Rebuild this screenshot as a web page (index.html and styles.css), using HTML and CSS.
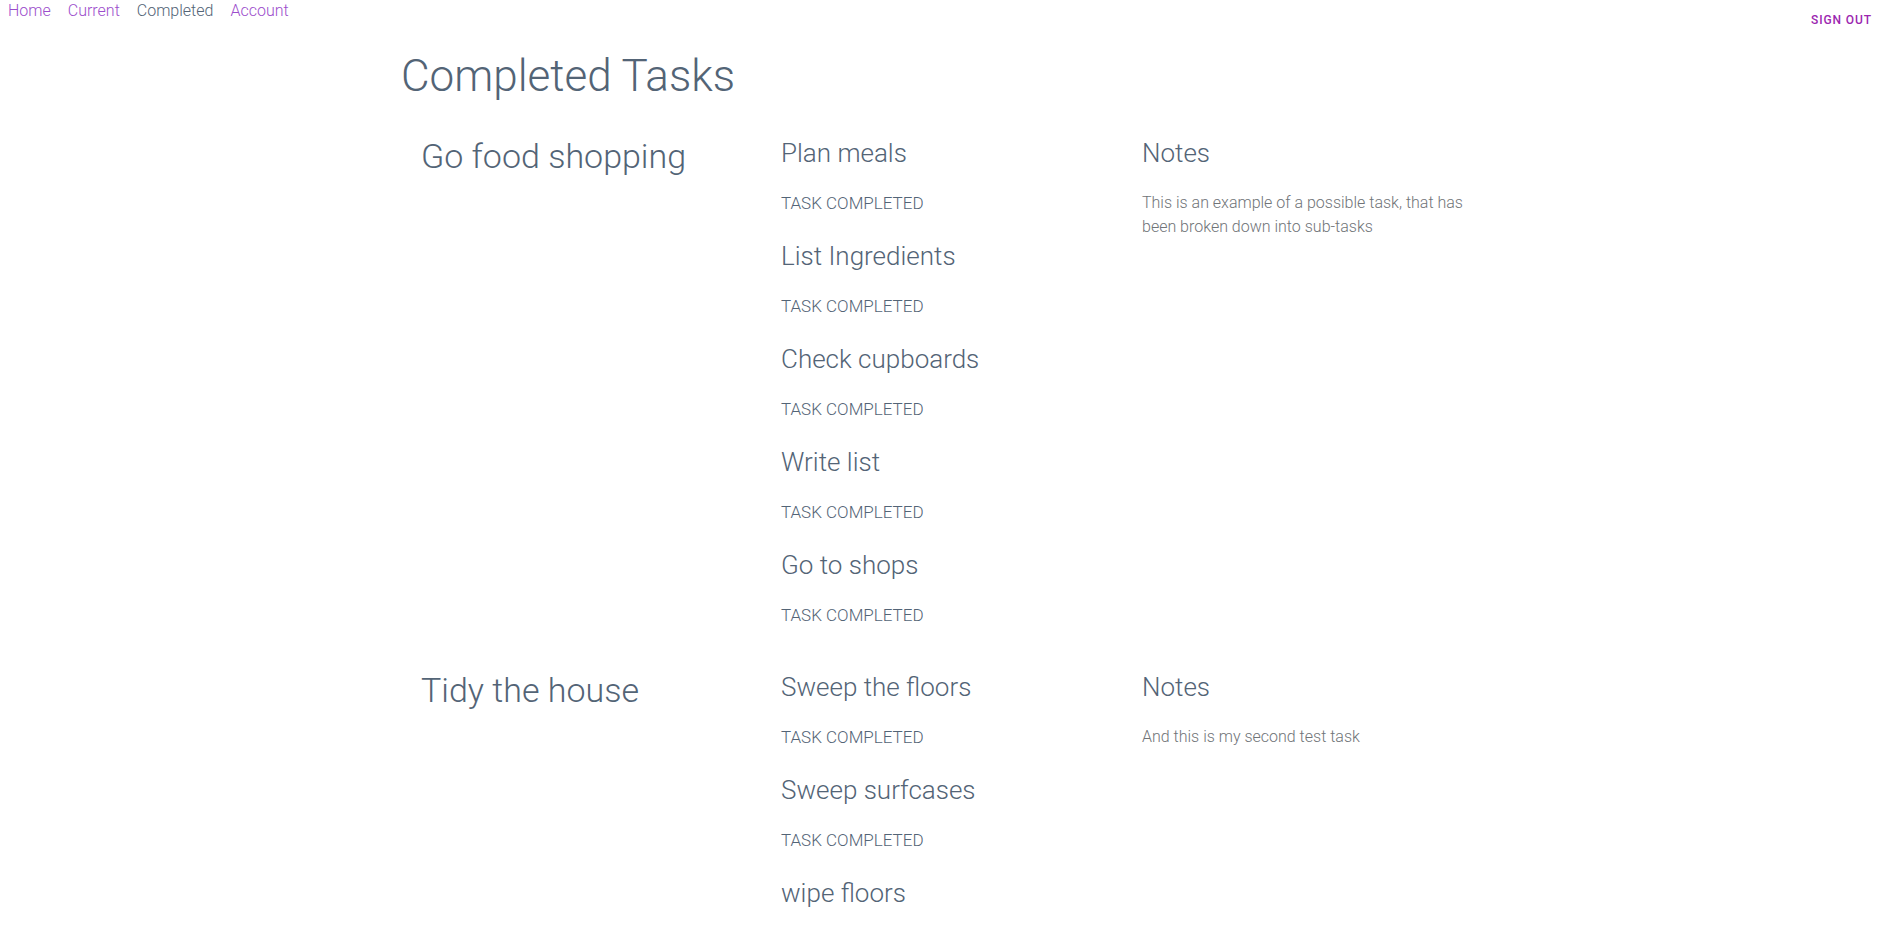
FILE: index.html
```html
<!DOCTYPE html>
<html lang="en">
<head>
<meta charset="utf-8">
<title>Completed Tasks</title>
<link rel="stylesheet" href="styles.css">
</head>
<body>
<header class="topbar">
  <nav class="nav">
    <a class="nav-link" href="#">Home</a>
    <a class="nav-link" href="#">Current</a>
    <a class="nav-link active" href="#">Completed</a>
    <a class="nav-link" href="#">Account</a>
  </nav>
  <button class="signout" type="button">Sign out</button>
</header>
<main class="container">
  <h1 class="page-title">Completed Tasks</h1>

  <section class="group">
    <h2 class="task-title">Go food shopping</h2>
    <div class="subtasks">
      <div class="subtask"><h3 class="sub-title">Plan meals</h3><p class="sub-status">TASK COMPLETED</p></div>
      <div class="subtask"><h3 class="sub-title">List Ingredients</h3><p class="sub-status">TASK COMPLETED</p></div>
      <div class="subtask"><h3 class="sub-title">Check cupboards</h3><p class="sub-status">TASK COMPLETED</p></div>
      <div class="subtask"><h3 class="sub-title">Write list</h3><p class="sub-status">TASK COMPLETED</p></div>
      <div class="subtask"><h3 class="sub-title">Go to shops</h3><p class="sub-status">TASK COMPLETED</p></div>
    </div>
    <div class="notes">
      <h3 class="notes-title">Notes</h3>
      <p class="notes-text">This is an example of a possible task, that has been broken down into sub-tasks</p>
    </div>
  </section>

  <section class="group">
    <h2 class="task-title">Tidy the house</h2>
    <div class="subtasks">
      <div class="subtask"><h3 class="sub-title">Sweep the floors</h3><p class="sub-status">TASK COMPLETED</p></div>
      <div class="subtask"><h3 class="sub-title">Sweep surfcases</h3><p class="sub-status">TASK COMPLETED</p></div>
      <div class="subtask"><h3 class="sub-title">wipe floors</h3></div>
    </div>
    <div class="notes">
      <h3 class="notes-title">Notes</h3>
      <p class="notes-text">And this is my second test task</p>
    </div>
  </section>
</main>
</body>
</html>
```

FILE: styles.css
```css
html, body {
  margin: 0;
  padding: 0;
  background: #ffffff;
}

body {
  font-family: Roboto, "Liberation Sans", Arial, sans-serif;
  font-weight: 300;
  color: #536476;
}

.topbar {
  display: flex;
  justify-content: space-between;
  align-items: flex-start;
  height: 38px;
}

.nav {
  display: flex;
  gap: 17px;
  padding-left: 8px;
}

.nav-link {
  font-size: 16px;
  line-height: 22px;
  font-weight: 300;
  color: #9c4dcc;
  text-decoration: none;
}

.nav-link.active {
  color: #536476;
}

.signout {
  margin: 12px 27px 0 0;
  padding: 0;
  border: 0;
  background: none;
  font-family: Roboto, "Liberation Sans", Arial, sans-serif;
  font-size: 12px;
  line-height: 16px;
  font-weight: 500;
  letter-spacing: 0.075em;
  text-transform: uppercase;
  color: #9c27b0;
  cursor: pointer;
}

.container {
  width: 1097px;
  margin: 0 auto;
}

.page-title {
  margin: 14px 0 0;
  font-size: 44px;
  line-height: 48px;
  font-weight: 300;
}

.group {
  display: grid;
  grid-template-columns: 360px 361px 1fr;
  align-items: start;
  padding-left: 20px;
  margin-top: 37px;
}

.group + .group {
  margin-top: 19px;
}

.task-title {
  margin: 0;
  font-size: 34px;
  line-height: 38px;
  font-weight: 300;
}

.sub-title {
  margin: 0;
  font-size: 26px;
  line-height: 32px;
  font-weight: 300;
}

.sub-status {
  margin: 22px 0 25px;
  font-size: 17px;
  line-height: 24px;
  font-weight: 300;
}

.notes {
  max-width: 355px;
}

.notes-title {
  margin: 0;
  font-size: 26px;
  line-height: 32px;
  font-weight: 300;
}

.notes-text {
  margin: 22px 0 0;
  font-size: 16px;
  line-height: 24px;
  font-weight: 300;
  color: #707478;
}
```
